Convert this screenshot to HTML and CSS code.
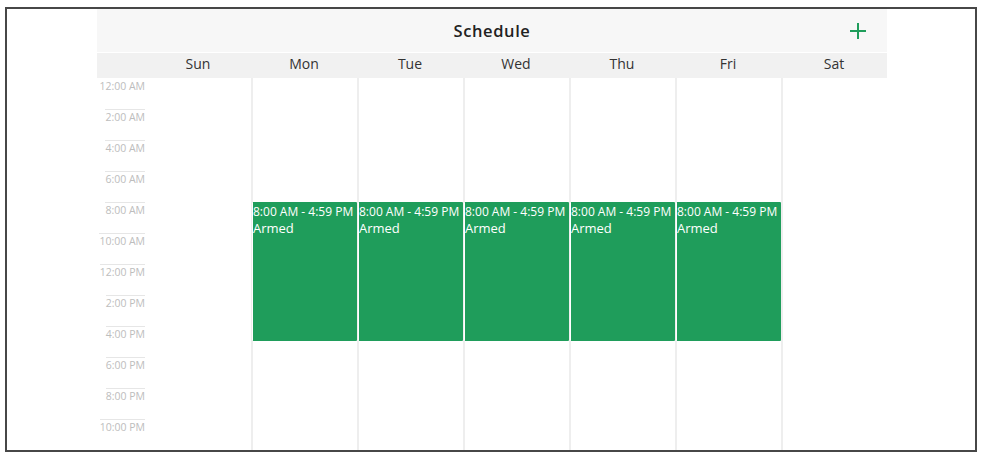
FILE: index.html
```html
<!DOCTYPE html>
<html lang="en">
<head>
    <meta charset="UTF-8">
    <meta name="viewport" content="width=device-width, initial-scale=1.0">
    <link rel="stylesheet" href="styles.css">
    <title>Schedule</title>
</head>
<body>
    <div class="frame">
        <div class="schedule">
            <div class="title-bar">
                <span></span>
                <div class="title">Schedule</div>
                <button class="add-button" title="Add">
                    <svg width="18" height="18" viewBox="0 0 18 18">
                        <path d="M9 1 V17 M1 9 H17" stroke="#1f9d5b" stroke-width="2" fill="none"/>
                    </svg>
                </button>
            </div>
            <div class="day-header">
                <div></div>
                <div>Sun</div>
                <div>Mon</div>
                <div>Tue</div>
                <div>Wed</div>
                <div>Thu</div>
                <div>Fri</div>
                <div>Sat</div>
            </div>
            <div class="week">
                <div class="time-col">
                    <div class="hour"><span>12:00 AM</span></div>
                    <div class="hour"><span>2:00 AM</span></div>
                    <div class="hour"><span>4:00 AM</span></div>
                    <div class="hour"><span>6:00 AM</span></div>
                    <div class="hour"><span>8:00 AM</span></div>
                    <div class="hour"><span>10:00 AM</span></div>
                    <div class="hour"><span>12:00 PM</span></div>
                    <div class="hour"><span>2:00 PM</span></div>
                    <div class="hour"><span>4:00 PM</span></div>
                    <div class="hour"><span>6:00 PM</span></div>
                    <div class="hour"><span>8:00 PM</span></div>
                    <div class="hour"><span>10:00 PM</span></div>
                </div>
                <div class="day first"></div>
                <div class="day">
                    <div class="event" style="top: 124px; height: 139px;">
                        <div class="event-time">8:00 AM - 4:59 PM</div>
                        <div class="event-mode">Armed</div>
                    </div>
                </div>
                <div class="day">
                    <div class="event" style="top: 124px; height: 139px;">
                        <div class="event-time">8:00 AM - 4:59 PM</div>
                        <div class="event-mode">Armed</div>
                    </div>
                </div>
                <div class="day">
                    <div class="event" style="top: 124px; height: 139px;">
                        <div class="event-time">8:00 AM - 4:59 PM</div>
                        <div class="event-mode">Armed</div>
                    </div>
                </div>
                <div class="day">
                    <div class="event" style="top: 124px; height: 139px;">
                        <div class="event-time">8:00 AM - 4:59 PM</div>
                        <div class="event-mode">Armed</div>
                    </div>
                </div>
                <div class="day">
                    <div class="event" style="top: 124px; height: 139px;">
                        <div class="event-time">8:00 AM - 4:59 PM</div>
                        <div class="event-mode">Armed</div>
                    </div>
                </div>
                <div class="day"></div>
            </div>
        </div>
    </div>
</body>
</html>
```

FILE: styles.css
```css
body {
    margin: 0;
    background: #fff;
    font-family: 'Open Sans', 'Noto Sans', sans-serif;
}

.frame {
    margin: 7px 4px 0 5px;
    height: 441px;
    border: 2px solid #474747;
    overflow: hidden;
}

.schedule {
    width: 790px;
    margin-left: 90px;
}

.title-bar {
    display: grid;
    grid-template-columns: 1fr auto 1fr;
    align-items: center;
    height: 43px;
    background: #f7f7f7;
}

.title {
    font-size: 16.5px;
    font-weight: 600;
    color: #222;
    letter-spacing: 0.6px;
}

.add-button {
    justify-self: end;
    margin-right: 20px;
    padding: 0;
    border: none;
    background: none;
    cursor: pointer;
    display: flex;
}

.day-header {
    display: grid;
    grid-template-columns: 48px repeat(7, 1fr);
    height: 25px;
    margin-top: 1px;
    background: #f1f1f1;
    font-size: 14px;
    color: #333;
    line-height: 22px;
    text-align: center;
}

.week {
    display: grid;
    grid-template-columns: 48px repeat(7, 1fr);
    height: 372px;
}

.time-col {
    display: flex;
    flex-direction: column;
}

.hour {
    height: 31px;
    font-size: 10.5px;
    color: #bdbdbd;
    text-align: right;
}

.hour span {
    display: inline-block;
    padding-top: 1px;
    border-top: 1px solid #e6e6e6;
    line-height: 13px;
}

.hour:first-child span {
    border-top-color: transparent;
}

.day {
    position: relative;
    border-left: 2px solid #eeeeee;
}

.day.first {
    border-left: none;
}

.event {
    position: absolute;
    left: -1px;
    right: 0;
    box-sizing: border-box;
    padding-top: 2px;
    background: #1f9d5b;
    color: #fff;
    border-left: 1px solid #fff;
    border-radius: 1px;
}

.event-time {
    font-size: 12px;
    line-height: 16px;
    white-space: nowrap;
}

.event-mode {
    font-size: 13px;
    line-height: 16px;
}
```
